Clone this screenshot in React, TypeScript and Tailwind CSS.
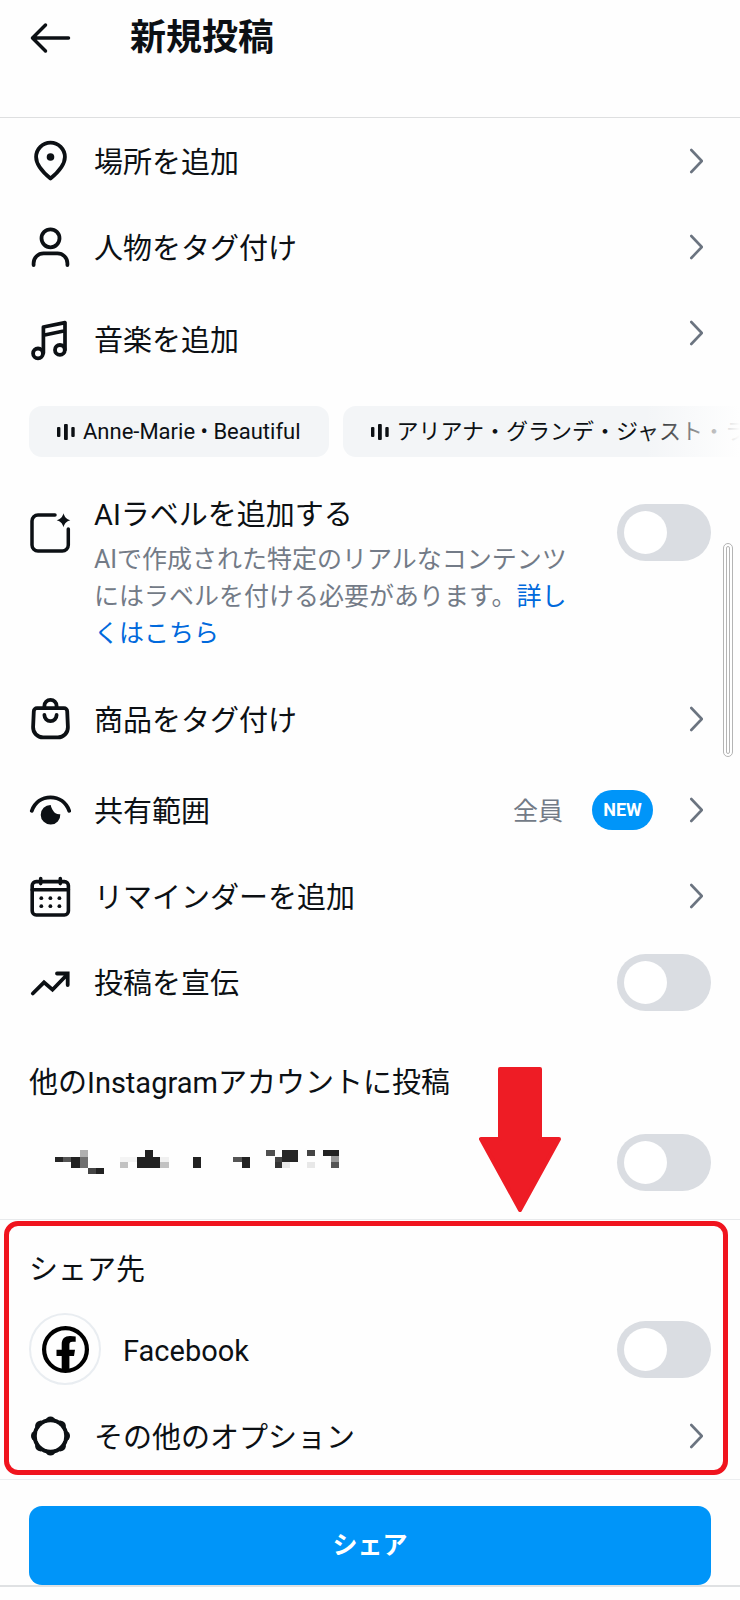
import { ReactNode, useState } from 'react';

const IconBox = ({ children }: { children: ReactNode }) => (
  <svg
    className="h-[42px] w-[42px] shrink-0"
    viewBox="0 0 42 42"
    fill="none"
    stroke="currentColor"
    strokeWidth="3.8"
    strokeLinecap="round"
    strokeLinejoin="round"
    aria-hidden="true"
  >
    {children}
  </svg>
);

const BackIcon = () => (
  <IconBox>
    <path d="M3.500 21H39.500M16.500 8 3.500 21l13 13" strokeWidth="3.500" />
  </IconBox>
);

const PinIcon = () => (
  <IconBox>
    <path d="M21.500 38.500C16 34 7.100 26.500 7.100 17a14.400 14.400 0 0 1 28.800 0c0 9.500-8.900 17-14.400 21.500z" />
    <circle cx="21.500" cy="17" r="3.800" fill="currentColor" stroke="none" />
  </IconBox>
);

const PersonIcon = () => (
  <IconBox>
    <circle cx="21.500" cy="12.300" r="9" />
    <path d="M4.600 39v-1.700a10 10 0 0 1 10-10h13.800a10 10 0 0 1 10 10V39" />
  </IconBox>
);

const MusicIcon = () => (
  <IconBox>
    <circle cx="9" cy="34.400" r="4.900" />
    <circle cx="30.900" cy="30.900" r="4.900" />
    <path d="M14.400 34V8l21.600-4.400v27M14.400 16.200 36 11.800" strokeWidth="3.700" />
  </IconBox>
);

const AiLabelIcon = () => (
  <IconBox>
    <path d="M26 3H9a6 6 0 0 0-6 6v24a6 6 0 0 0 6 6h24.300a6 6 0 0 0 6-6V17" strokeWidth="3.500" />
    <path
      d="M34.500 1.200c1.200 4 2.800 5.700 6.800 7-4 1.300-5.600 3-6.800 7-1.200-4-2.800-5.700-6.800-7 4-1.300 5.600-3 6.800-7z"
      fill="currentColor"
      stroke="none"
    />
  </IconBox>
);

const BagIcon = () => (
  <IconBox>
    <path d="M8 10.200h27a3.200 3.200 0 0 1 3.200 3.100l.7 15.700a10 10 0 0 1-10 10.400H14.100a10 10 0 0 1-10-10.400l.7-15.700A3.200 3.200 0 0 1 8 10.200z" />
    <path d="M15.400 9.500V8a6.100 6.100 0 0 1 12.200 0v1.500M15.400 17a6.100 6.100 0 0 0 12.200 0" />
  </IconBox>
);

const EyeIcon = () => (
  <IconBox>
    <path d="M2.800 21.800C6 13.300 13 8.400 21.500 8.400s15.500 4.900 18.700 13.400" />
    <path
      d="M21.700 16A9.800 9.800 0 1 0 31.300 25.200c-3.500.4-5.800-1.100-7.100-3.400-1.100-1.900-2.200-3.600-2.500-5.800z"
      fill="currentColor"
      stroke="none"
    />
  </IconBox>
);

const CalendarIcon = () => (
  <IconBox>
    <rect x="3.200" y="6.600" width="36.200" height="33.400" rx="4" strokeWidth="3.600" />
    <path d="M3.200 14.800h36.200M11.700 3.600v5M31.300 3.600v5" strokeWidth="3.600" />
    <g fill="currentColor" stroke="none">
      {[12.3, 21.4, 30.4].map(x => (
        <g key={x}>
          <circle cx={x} cy="23.200" r="1.900" />
          <circle cx={x} cy="31.200" r="1.900" />
        </g>
      ))}
    </g>
  </IconBox>
);

const TrendIcon = () => (
  <IconBox>
    <path d="M3.800 32.500 15 21.300l8.500 7.400 15-15.500M28 12.500h10.700v11.500" strokeLinejoin="miter" />
  </IconBox>
);

const GearIcon = () => (
  <IconBox>
    <circle cx="21.500" cy="21" r="15.700" strokeWidth="4.200" />
    <g fill="currentColor" stroke="none">
      {[0, 45, 90, 135, 180, 225, 270, 315].map(deg => (
        <ellipse key={deg} cx="37" cy="21" rx="4" ry="4.800" transform={`rotate(${deg} 21.500 21)`} />
      ))}
    </g>
    <circle cx="21.500" cy="21" r="13.700" fill="#fefefe" stroke="none" />
  </IconBox>
);

const FacebookIcon = () => (
  <svg className="h-[47px] w-[47px]" viewBox="0 0 47 47" aria-hidden="true">
    <circle cx="23.500" cy="23.500" r="21.400" fill="none" stroke="#000" strokeWidth="4.200" />
    <path d="M19.700 45.500V30h-5.200v-6.300h5.200v-5.200c0-5.700 3.100-8.500 8.300-8.500 2 0 4 .2 5.700.5v5.200h-3.200c-2.400 0-3.100 1.200-3.100 3v5h5.600l-1 6.300h-4.600v15.500z" />
  </svg>
);

const Chevron = () => (
  <svg
    className="mr-2 h-[26px] w-[14px] shrink-0 text-[#6b7480]"
    viewBox="0 0 14 26"
    fill="none"
    stroke="currentColor"
    strokeWidth="2.600"
    strokeLinecap="round"
    strokeLinejoin="round"
    aria-hidden="true"
  >
    <path d="M2.300 2 12.800 13 2.300 24" />
  </svg>
);

const Equalizer = () => (
  <svg className="h-4 w-[18px] shrink-0" viewBox="0 0 18 16" fill="currentColor" aria-hidden="true">
    <rect x="0" y="3" width="3.400" height="10" rx="1" />
    <rect x="7" y="0" width="3.800" height="16" rx="1" />
    <rect x="14.300" y="3" width="3.400" height="10" rx="1" />
  </svg>
);

// x, y, width, height, colour
const mosaic: [number, number, number, number, string][] = [
  [0, 20, 25, 15, '#262626'], [25, 20, 24, 15, '#555'], [49, 20, 25, 34, '#222'],
  [74, 0, 24, 20, '#b0b0b0'], [74, 20, 24, 34, '#707070'], [98, 54, 24, 17, '#444'],
  [122, 54, 24, 17, '#222'], [195, 20, 50, 15, '#f4f4f4'], [195, 35, 24, 19, '#c2c2c2'],
  [245, 20, 71, 34, '#222'], [270, 0, 24, 20, '#222'], [316, 20, 25, 15, '#f0f0f0'],
  [316, 35, 25, 19, '#c2c2c2'], [414, 20, 25, 34, '#222'], [536, 20, 25, 15, '#555'],
  [561, 20, 24, 34, '#222'], [634, 0, 26, 18, '#505050'], [660, 20, 24, 15, '#444'],
  [660, 35, 22, 19, '#333'], [682, 0, 49, 35, '#262626'], [682, 35, 24, 19, '#e8e8e8'],
  [756, 0, 24, 18, '#444'], [756, 35, 24, 19, '#e8e8e8'], [806, 0, 47, 18, '#222'],
  [830, 18, 23, 17, '#999'], [830, 35, 23, 19, '#555'],
];

const Toggle = ({ id, label }: { id: string; label?: string }) => {
  const [on, setOn] = useState<boolean>(false);
  return (
    <input
      id={id}
      type="checkbox"
      role="switch"
      aria-label={label}
      checked={on}
      onChange={e => setOn(e.target.checked)}
      className="h-[57px] w-[94px] shrink-0 cursor-pointer appearance-none rounded-full bg-[#dadde2] p-[7px] before:block before:h-[43px] before:w-[43px] before:rounded-full before:bg-white checked:bg-[#0095f6] checked:before:ml-auto"
    />
  );
};

interface LinkRowProps {
  icon: ReactNode;
  label: string;
  children?: ReactNode;
}

const LinkRow = ({ icon, label, children }: LinkRowProps) => (
  <button type="button" className="flex h-[86px] w-full items-center pr-[29px] pl-[29px] text-left">
    {icon}
    <span className="ml-[23px] flex-1 pt-[3px]">{label}</span>
    {children}
    <Chevron />
  </button>
);

const songs = ['Anne-Marie • Beautiful', 'アリアナ・グランデ・ジャスト・ラ'];

const App = () => {
  return (
    <div
      lang="ja"
      className="relative min-h-screen overflow-x-hidden bg-[#fefefe] font-[Roboto,'Noto_Sans_CJK_JP',sans-serif] text-[29px] leading-[40px] text-[#0c1014]"
    >
      <header className="flex h-[118px] items-start border-b border-[#dedfe0] pt-[17px] pl-[29px]">
        <button type="button" aria-label="戻る">
          <BackIcon />
        </button>
        <h1 className="ml-[59px] pt-px text-[36px] font-bold">新規投稿</h1>
      </header>

      <main>
        <LinkRow icon={<PinIcon />} label="場所を追加" />
        <LinkRow icon={<PersonIcon />} label="人物をタグ付け" />
        <button type="button" className="flex h-[86px] w-full items-center pr-[29px] pl-[29px] text-left">
          <span className="flex flex-1 items-center gap-[23px] pt-[14px]">
            <MusicIcon />
            <span className="pt-px">音楽を追加</span>
          </span>
          <Chevron />
        </button>

        {/* Suggested songs */}
        <div className="relative mt-[30px] flex gap-[14px] overflow-hidden pl-[29px] text-[22px]">
          {songs.map(song => (
            <button
              key={song}
              type="button"
              className="flex h-[51px] shrink-0 items-center gap-2 rounded-[13px] bg-[#f3f5f7] px-7 whitespace-nowrap"
            >
              <Equalizer />
              {song}
            </button>
          ))}
          <div className="pointer-events-none absolute inset-y-0 right-0 w-24 bg-linear-to-r from-transparent to-[#fefefe]" />
        </div>

        {/* AI label */}
        <div className="flex items-start pt-[38px] pr-[29px] pl-[29px]">
          <div className="mt-[17px]">
            <AiLabelIcon />
          </div>
          <div className="ml-[23px] flex-1">
            <label htmlFor="ai-label">AIラベルを追加する</label>
            <p className="mt-[6px] pr-[37px] text-[25px] leading-[37px] text-[#737b87]">
              AIで作成された特定のリアルなコンテンツにはラベルを付ける必要があります。
              <a href="#" className="text-[#0069dc]">詳しくはこちら</a>
            </p>
          </div>
          <div className="mt-[9px] flex">
            <Toggle id="ai-label" />
          </div>
        </div>

        <div className="mt-6">
          <LinkRow icon={<BagIcon />} label="商品をタグ付け" />
        </div>
        <div className="mt-[5px]">
          <LinkRow icon={<EyeIcon />} label="共有範囲">
            <span className="pt-[3px] text-[25px] text-[#737b87]">全員</span>
            <span className="mr-9 ml-[29px] flex h-10 w-[61px] items-center justify-center rounded-full bg-[#0095f9] text-[18px] font-bold text-white">
              NEW
            </span>
          </LinkRow>
        </div>
        <LinkRow icon={<CalendarIcon />} label="リマインダーを追加" />
        <div className="flex h-[86px] items-center pr-[29px] pl-[29px]">
          <TrendIcon />
          <label htmlFor="promote" className="ml-[23px] flex-1 pt-[3px]">投稿を宣伝</label>
          <Toggle id="promote" />
        </div>

        {/* Other accounts */}
        <section className="relative border-b border-[#e8eaec] pt-[38px] pb-[14px]">
          <h2 className="pl-[29px]">他のInstagramアカウントに投稿</h2>
          <div className="mt-4 flex h-[86px] items-center justify-between pr-[29px] pl-[55px]">
            <svg className="h-6 w-[284px]" viewBox="0 0 853 71" shapeRendering="crispEdges" aria-hidden="true">
              {mosaic.map(([x, y, w, h, fill]) => (
                <rect key={`${x}-${y}`} x={x} y={y} width={w} height={h} fill={fill} />
              ))}
            </svg>
            <Toggle id="account" label="アカウント" />
          </div>
          <svg className="absolute right-[179px] bottom-[7px] h-[145px] w-[82px]" viewBox="0 0 82 145" aria-hidden="true">
            <path
              d="M21 2H61V72H80L41 143 2 72H21z"
              fill="#ee1c25"
              stroke="#ee1c25"
              strokeWidth="4"
              strokeLinejoin="round"
            />
          </svg>
        </section>

        {/* Share targets */}
        <section className="mt-px mr-3 ml-1 rounded-[14px] border-5 border-[#f0141e] pt-6 pr-3 pl-5">
          <h2>シェア先</h2>
          <div className="mt-4 flex h-[86px] items-center">
            <span className="flex h-[72px] w-[72px] items-center justify-center rounded-full border-2 border-[#e9edf1]">
              <FacebookIcon />
            </span>
            <label htmlFor="facebook" className="ml-[22px] flex-1 pt-[3px]">Facebook</label>
            <Toggle id="facebook" />
          </div>
          <button type="button" className="mt-[10px] flex h-[68px] w-full items-center text-left">
            <GearIcon />
            <span className="ml-[23px] flex-1 pt-[3px]">その他のオプション</span>
            <Chevron />
          </button>
        </section>
      </main>

      <footer className="mt-1 border-t border-b-2 border-t-[#eceef0] border-b-[#dfe1e3] pt-[26px] pr-[29px] pl-[29px]">
        <button type="button" className="h-[79px] w-full rounded-[13px] bg-[#0095f9] pt-px text-[25px] font-bold text-white">
          シェア
        </button>
      </footer>

      {/* Scroll thumb */}
      <div className="absolute top-[543px] right-[7px] h-[214px] w-[10px] rounded-full border border-[#b4b4b4] bg-white p-[2px]">
        <div className="h-full rounded-full border border-[#b4b4b4]" />
      </div>
    </div>
  );
};

export default App;
